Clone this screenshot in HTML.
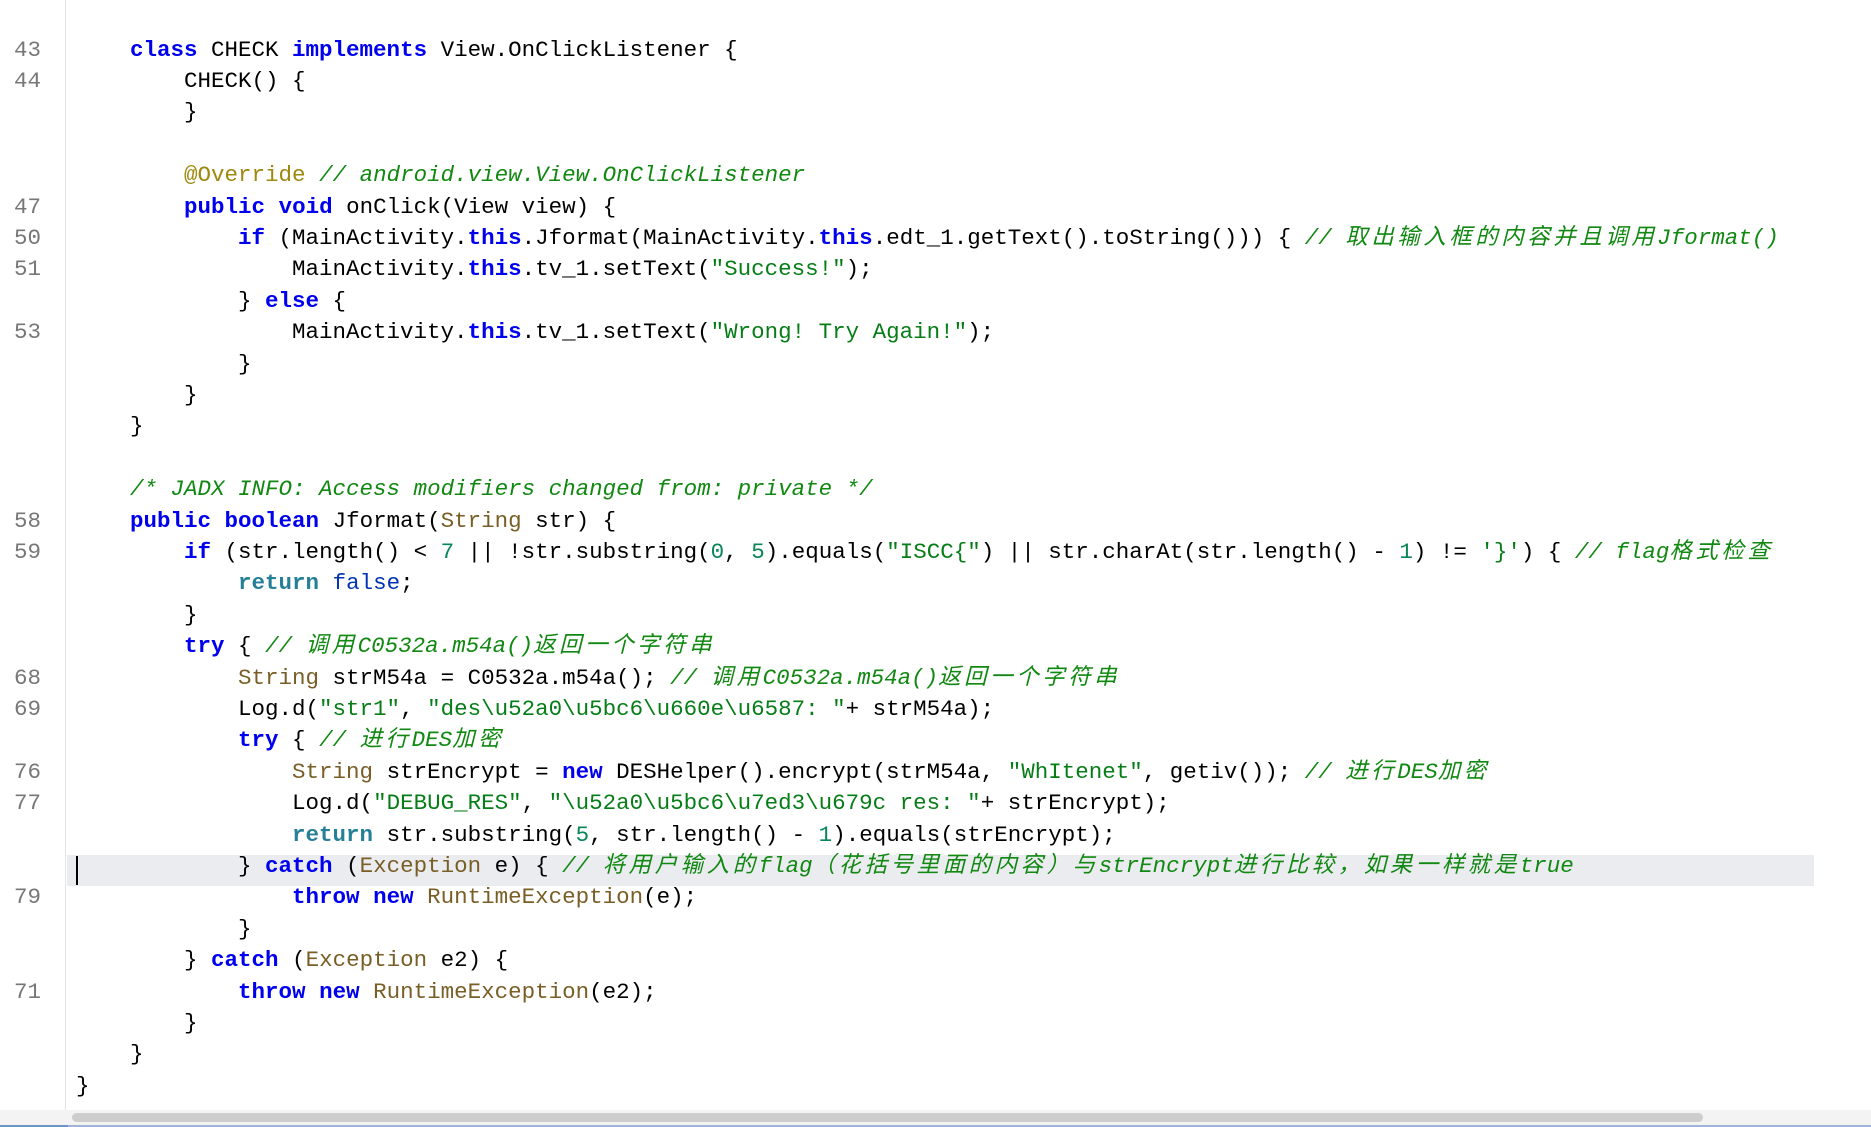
<!DOCTYPE html>
<html><head><meta charset="utf-8"><style>
html,body{margin:0;padding:0;background:#fff;width:1871px;height:1127px;overflow:hidden;position:relative}
.g{position:absolute;left:65px;top:0;width:1px;height:1110px;background:#e3e3e3}
.r{position:absolute;left:0;height:31.4px;line-height:31.4px;white-space:pre;font-family:"Liberation Mono","Noto Sans CJK SC",monospace;font-size:22.5px;color:#000}
.n{position:absolute;left:14px;white-space:pre;font-family:"Liberation Mono",monospace;font-size:22.5px;color:#777;height:31.4px;line-height:31.4px}
.k{color:#0000ee;font-weight:bold}
.rt{color:#267f99;font-weight:bold}
.f{color:#0033b3}
.c{color:#118811;font-style:italic}
.s{color:#067d17}
.nm{color:#098658}
.t{color:#795e26}
.a{color:#9e880d}
.z{letter-spacing:3.5px}
.hl{position:absolute;left:67px;top:855px;width:1747px;height:31px;background:#ebecf0}
.cur{position:absolute;left:76px;top:856px;width:2px;height:29px;background:#000}
</style></head><body>
<div class="g"></div>
<div class="hl"></div><div class="cur"></div>
<div id="c"></div>
<div style="position:absolute;left:0;top:1110px;width:1871px;height:15px;background:#f3f3f3"></div>
<div style="position:absolute;left:72px;top:1113px;width:1631px;height:9px;border-radius:5px;background:#cdcdcd"></div>
<div style="position:absolute;left:0;top:1125px;width:1871px;height:2px;background:#9db4d2"></div>
<div style="position:absolute;left:0;top:1125px;width:68px;height:2px;background:#6f93c2"></div>
<script>
var L=[
["43",'    <span class="k">class</span> CHECK <span class="k">implements</span> View.OnClickListener {'],
["44",'        CHECK() {'],
["",'        }'],
["",''],
["",'        <span class="a">@Override</span> <span class="c">// android.view.View.OnClickListener</span>'],
["47",'        <span class="k">public</span> <span class="k">void</span> onClick(View view) {'],
["50",'            <span class="k">if</span> (MainActivity.<span class="k">this</span>.Jformat(MainActivity.<span class="k">this</span>.edt_1.getText().toString())) { <span class="c">// 取出输入框的内容并且调用Jformat()</span>'],
["51",'                MainActivity.<span class="k">this</span>.tv_1.setText(<span class="s">"Success!"</span>);'],
["",'            } <span class="k">else</span> {'],
["53",'                MainActivity.<span class="k">this</span>.tv_1.setText(<span class="s">"Wrong! Try Again!"</span>);'],
["",'            }'],
["",'        }'],
["",'    }'],
["",''],
["",'    <span class="c">/* JADX INFO: Access modifiers changed from: private */</span>'],
["58",'    <span class="k">public</span> <span class="k">boolean</span> Jformat(<span class="t">String</span> str) {'],
["59",'        <span class="k">if</span> (str.length() &lt; <span class="nm">7</span> || !str.substring(<span class="nm">0</span>, <span class="nm">5</span>).equals(<span class="s">"ISCC{"</span>) || str.charAt(str.length() - <span class="nm">1</span>) != <span class="s">\'}\'</span>) { <span class="c">// flag格式检查</span>'],
["",'            <span class="rt">return</span> <span class="f">false</span>;'],
["",'        }'],
["",'        <span class="k">try</span> { <span class="c">// 调用C0532a.m54a()返回一个字符串</span>'],
["68",'            <span class="t">String</span> strM54a = C0532a.m54a(); <span class="c">// 调用C0532a.m54a()返回一个字符串</span>'],
["69",'            Log.d(<span class="s">"str1"</span>, <span class="s">"des\\u52a0\\u5bc6\\u660e\\u6587: "</span>+ strM54a);'],
["",'            <span class="k">try</span> { <span class="c">// 进行DES加密</span>'],
["76",'                <span class="t">String</span> strEncrypt = <span class="k">new</span> DESHelper().encrypt(strM54a, <span class="s">"WhItenet"</span>, getiv()); <span class="c">// 进行DES加密</span>'],
["77",'                Log.d(<span class="s">"DEBUG_RES"</span>, <span class="s">"\\u52a0\\u5bc6\\u7ed3\\u679c res: "</span>+ strEncrypt);'],
["",'                <span class="rt">return</span> str.substring(<span class="nm">5</span>, str.length() - <span class="nm">1</span>).equals(strEncrypt);'],
["",'            } <span class="k">catch</span> (<span class="t">Exception</span> e) { <span class="c">// 将用户输入的flag（花括号里面的内容）与strEncrypt进行比较，如果一样就是true</span>'],
["79",'                <span class="k">throw</span> <span class="k">new</span> <span class="t">RuntimeException</span>(e);'],
["",'            }'],
["",'        } <span class="k">catch</span> (<span class="t">Exception</span> e2) {'],
["71",'            <span class="k">throw</span> <span class="k">new</span> <span class="t">RuntimeException</span>(e2);'],
["",'        }'],
["",'    }'],
["",'}']
];
var h='';
for(var i=0;i<L.length;i++){var t=34.5+i*31.4;
var s=L[i][1].replace(/([\u3000-\u9fff\uff00-\uffef]+)/g,'<span class="z">$1</span>');
h+='<div class="n" style="top:'+t+'px">'+L[i][0]+'</div>';
h+='<div class="r" style="left:76px;top:'+t+'px">'+s+'</div>';}
document.getElementById('c').innerHTML=h;
</script>
</body></html>
